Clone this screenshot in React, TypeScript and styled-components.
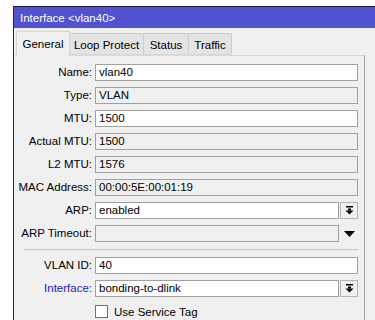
import React from "react";
import styled, { createGlobalStyle } from "styled-components";

const Global = createGlobalStyle`
  html, body { margin: 0; padding: 0; background: #ffffff; overflow: hidden; }
  body { font-family: "Liberation Sans", Arial, sans-serif; font-size: 11px; color: #000; }
`;

const Window = styled.div`
  margin: 6px 0 0 13px;
  height: 314px;
  border-left: 1px solid #2a2a2a;
  border-top: 1px solid #1e1e40;
  background: #f0f0f0;
  box-sizing: border-box;
  overflow: hidden;
`;

const TitleBar = styled.div`
  height: 21px;
  background: #5052cf;
  color: #ffffff;
  font-size: 11.5px;
  display: flex;
  align-items: center;
  padding-left: 6px;
`;

const TabBar = styled.div`
  display: flex;
  align-items: flex-end;
  padding: 3px 0 0 2px;
  height: 27px;
  box-sizing: border-box;
  position: relative;
  z-index: 1;
`;

const Tab = styled.div<{ $active?: boolean; $w: number }>`
  width: ${(p) => p.$w}px;
  height: ${(p) => (p.$active ? 25 : 22)}px;
  box-sizing: border-box;
  display: flex;
  align-items: center;
  justify-content: center;
  font-size: 11.5px;
  background: ${(p) => (p.$active ? "#f0f0f0" : "#e4e4e4")};
  border: 1px solid ${(p) => (p.$active ? "#d4d4d4" : "#cdcdcd")};
  border-bottom: ${(p) => (p.$active ? "none" : "1px solid #d9d9d9")};
  margin-bottom: ${(p) => (p.$active ? "-1px" : "0")};
  padding-top: ${(p) => (p.$active ? "0" : "1px")};
  & + & { border-left: none; }
`;

const Panel = styled.div`
  width: 351px;
  height: 270px;
  box-sizing: border-box;
  border-top: 1px solid #d9d9d9;
  border-right: 1px solid #a4a4a4;
  border-left: 1px solid #f0f0f0;
  padding: 8px 6px 0 0;
  display: grid;
  grid-template-columns: 77px 1fr;
  column-gap: 3px;
  row-gap: 6px;
  align-content: start;
`;

const Label = styled.div<{ $link?: boolean }>`
  text-align: right;
  height: 17px;
  line-height: 17px;
  font-size: 11.5px;
  color: ${(p) => (p.$link ? "#2323b8" : "#000")};
  white-space: nowrap;
`;

const Field = styled.div`
  display: flex;
  align-items: center;
  gap: 1px;
  height: 17px;
`;

const Input = styled.div<{ $ro?: boolean }>`
  flex: 1;
  height: 17px;
  box-sizing: border-box;
  border: 1px solid #a0a0a0;
  background: ${(p) => (p.$ro ? "#f0f0f0" : "#ffffff")};
  padding-left: 3px;
  line-height: 15px;
  font-size: 11.5px;
  white-space: nowrap;
  overflow: hidden;
`;

const DropButton = styled.div<{ $flat?: boolean }>`
  width: 18px;
  height: 17px;
  box-sizing: border-box;
  border: 1px solid ${(p) => (p.$flat ? "transparent" : "#b4b4b4")};
  background: #f0f0f0;
  display: flex;
  align-items: center;
  justify-content: center;
`;

const Separator = styled.div`
  grid-column: 1 / -1;
  margin: 1px 0 0 9px;
  height: 1px;
  border-top: 1px solid #c8c8c8;
`;

const CheckRow = styled.label`
  grid-column: 2;
  display: flex;
  align-items: center;
  gap: 6px;
  height: 17px;
  font-size: 11.5px;
`;

const Box = styled.span`
  width: 13px;
  height: 13px;
  box-sizing: border-box;
  border: 1px solid #707070;
  background: #ffffff;
`;

const BarArrow = () => (
  <svg width="9" height="9" viewBox="0 0 9 9">
    <rect x="1" y="0" width="7" height="1.5" fill="#000" />
    <rect x="3" y="2.5" width="3" height="2" fill="#000" />
    <polygon points="0.5,4.5 8.5,4.5 4.5,8.5" fill="#000" />
  </svg>
);

const Triangle = () => (
  <svg width="11" height="6" viewBox="0 0 11 6">
    <polygon points="0,0 11,0 5.5,6" fill="#000" />
  </svg>
);

type Row = { label: string; value: string; ro?: boolean; drop?: "bar" | "flat"; link?: boolean };

const top: Row[] = [
  { label: "Name:", value: "vlan40" },
  { label: "Type:", value: "VLAN", ro: true },
  { label: "MTU:", value: "1500" },
  { label: "Actual MTU:", value: "1500", ro: true },
  { label: "L2 MTU:", value: "1576", ro: true },
  { label: "MAC Address:", value: "00:00:5E:00:01:19", ro: true },
  { label: "ARP:", value: "enabled", drop: "bar" },
  { label: "ARP Timeout:", value: "", ro: true, drop: "flat" },
];

const bottom: Row[] = [
  { label: "VLAN ID:", value: "40" },
  { label: "Interface:", value: "bonding-to-dlink", drop: "bar", link: true },
];

const FormRow = ({ r }: { r: Row }) => (
  <>
    <Label $link={r.link}>{r.label}</Label>
    <Field>
      <Input $ro={r.ro}>{r.value}</Input>
      {r.drop === "bar" && (
        <DropButton>
          <BarArrow />
        </DropButton>
      )}
      {r.drop === "flat" && (
        <DropButton $flat>
          <Triangle />
        </DropButton>
      )}
    </Field>
  </>
);

export default function App() {
  return (
    <>
      <Global />
      <Window>
        <TitleBar>Interface &lt;vlan40&gt;</TitleBar>
        <TabBar>
          <Tab $active $w={54}>General</Tab>
          <Tab $w={74}>Loop Protect</Tab>
          <Tab $w={45}>Status</Tab>
          <Tab $w={43}>Traffic</Tab>
        </TabBar>
        <Panel>
          {top.map((r) => (
            <FormRow key={r.label} r={r} />
          ))}
          <Separator />
          {bottom.map((r) => (
            <FormRow key={r.label} r={r} />
          ))}
          <CheckRow>
            <Box />
            Use Service Tag
          </CheckRow>
        </Panel>
      </Window>
    </>
  );
}
